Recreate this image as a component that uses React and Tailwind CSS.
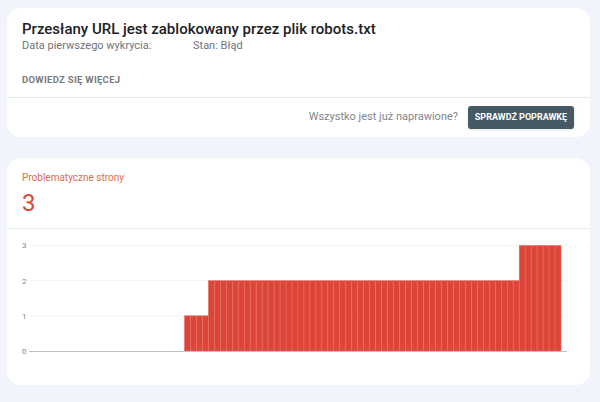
import React from "react";

const values = [
  ...Array(26).fill(0),
  ...Array(4).fill(1),
  ...Array(52).fill(2),
  ...Array(7).fill(3),
  0,
];

const Chart = () => {
  const x0 = 22;
  const x1 = 560;
  const w = (x1 - x0) / values.length;
  const base = 122;
  const unit = 35.2;
  return (
    <svg width="583" height="156" viewBox="0 0 583 156" className="block">
      {[1, 2, 3].map((v) => (
        <line key={v} x1={x0} x2={x1} y1={base - v * unit} y2={base - v * unit} stroke="#f1f3f4" strokeWidth="1" />
      ))}
      {values.map((v, i) =>
        v > 0 ? (
          <rect
            key={i}
            x={x0 + i * w}
            y={base - v * unit}
            width={w}
            height={v * unit}
            fill="#dd4539"
            stroke="#e6766c"
            strokeWidth="0.5"
          />
        ) : null
      )}
      <line x1={x0} x2={x1} y1={base + 0.5} y2={base + 0.5} stroke="#bdc1c6" strokeWidth="1" />
      {[0, 1, 2, 3].map((v) => (
        <text key={v} x="15" y={base - v * unit + 3} fontSize="8" fill="#80868b" fontFamily="Roboto, sans-serif">
          {v}
        </text>
      ))}
    </svg>
  );
};

export default function App() {
  return (
    <div className="min-h-[402px] w-[600px] bg-[#f1f4fb] pt-2 pl-[7px] font-['Roboto',sans-serif]">
      <div className="w-[583px] rounded-[14px] bg-white">
        <div className="px-[15px] pt-[11px] pb-[11px]">
          <h1 className="text-[15px] leading-5 font-medium text-[#202124]">
            Przesłany URL jest zablokowany przez plik robots.txt
          </h1>
          <div className="mt-[-1px] flex text-[11px] leading-[15px] text-[#6f7378]">
            <span className="w-[171px]">Data pierwszego wykrycia:</span>
            <span>Stan: Błąd</span>
          </div>
          <div className="mt-[21px] text-[9.5px] leading-3 font-bold tracking-[0.3px] text-[#76797e]">
            DOWIEDZ SIĘ WIĘCEJ
          </div>
        </div>
        <div className="flex h-10 items-center justify-end gap-[10px] border-t border-[#e8eaed] pr-4">
          <span className="text-[11px] text-[#80868b]">Wszystko jest już naprawione?</span>
          <button className="h-[23px] w-[106px] rounded-[3px] bg-[#455a64] text-[9px] font-bold text-white shadow-sm">
            SPRAWDŹ POPRAWKĘ
          </button>
        </div>
      </div>

      <div className="mt-[21px] h-[227px] w-[583px] rounded-[14px] bg-white">
        <div className="h-[70px] px-[15px] pt-[14px]">
          <div className="text-[10px] leading-3 text-[#dd6b4d]">Problematyczne strony</div>
          <div className="mt-[5px] text-[24px] leading-7 text-[#dd4539]">3</div>
        </div>
        <div className="border-t border-[#e8eaed]">
          <Chart />
        </div>
      </div>
    </div>
  );
}
